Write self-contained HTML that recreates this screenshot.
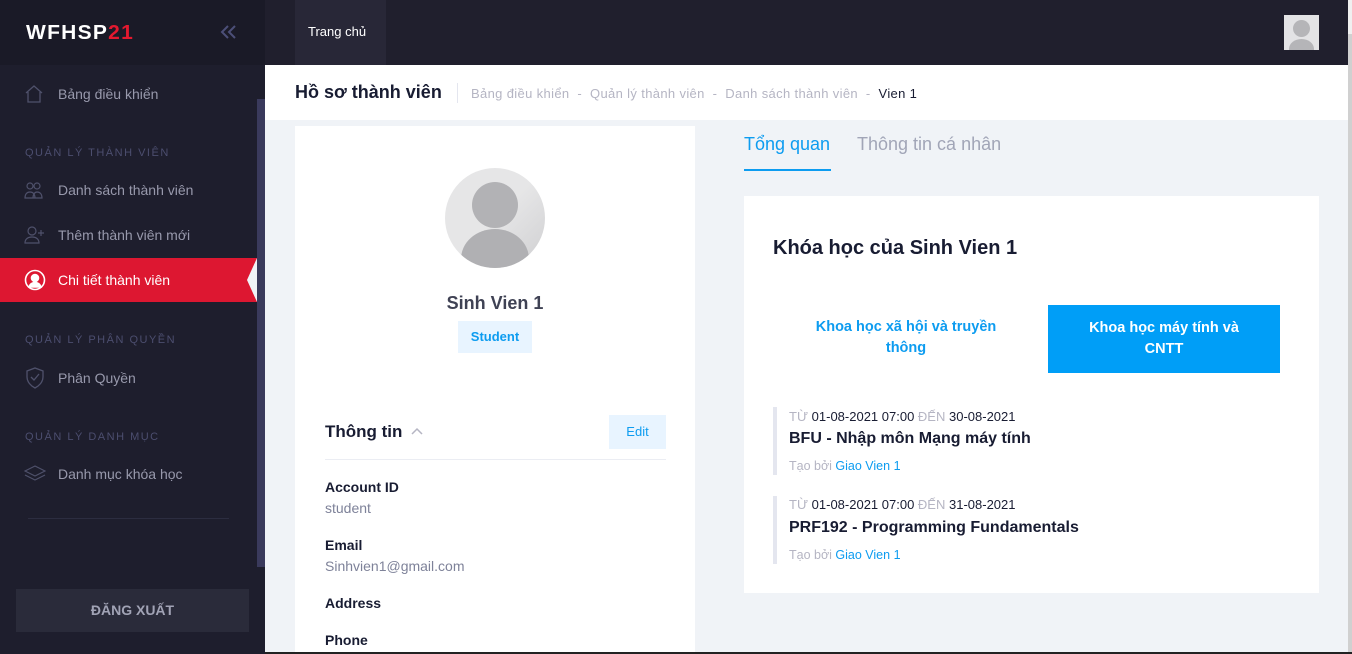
<!DOCTYPE html>
<html><head><meta charset="utf-8"><style>
*{box-sizing:border-box;margin:0;padding:0}
body{width:1352px;height:654px;overflow:hidden;background:#f0f3f7;font-family:"Liberation Sans",sans-serif;position:relative}
.abs{position:absolute}
.side{left:0;top:0;width:265px;height:654px;background:#1e1e2d}
.logo{left:0;top:0;width:265px;height:65px;background:#1a1a27}
.top{left:265px;top:0;width:1087px;height:65px;background:#201f2d}
.nav{color:#9899ac;font-size:14px}
.sec{color:#4c4e6f;font-size:11px;letter-spacing:1.5px}
.t{white-space:nowrap}
</style></head><body>
<div class="abs side"></div>
<div class="abs logo"></div>
<div class="abs t" style="left:26px;top:22px;font-size:20px;font-weight:900;color:#fff;letter-spacing:1.2px;transform:scaleX(1.05);transform-origin:left">WFHSP<span style="color:#e3192f">21</span></div>
<svg class="abs" style="left:220px;top:25px" width="18" height="14" viewBox="0 0 18 14" fill="none" stroke="#4c4f78" stroke-width="2"><path d="M8 1 L2 7 L8 13 M15 1 L9 7 L15 13"/></svg>
<div class="abs top"></div>
<div class="abs" style="left:295px;top:0;width:91px;height:65px;background:#282737"></div>
<div class="abs t" style="left:308px;top:24px;color:#fff;font-size:13px">Trang chủ</div>
<div class="abs" style="left:1284px;top:15px;width:35px;height:35px;background:#e3e3e5;overflow:hidden"><div class="abs" style="left:9px;top:5px;width:17px;height:17px;border-radius:50%;background:#b5b5b8"></div><div class="abs" style="left:5px;top:24px;width:25px;height:20px;border-radius:50%;background:#b5b5b8"></div></div>
<div class="abs" style="left:1348px;top:0;width:4px;height:654px;background:#d0d0d0"></div>
<div class="abs" style="left:1348px;top:0;width:4px;height:34px;background:#f0f0f0"></div>

<svg class="abs" style="left:24px;top:84px" width="20" height="20" viewBox="0 0 20 20" fill="none" stroke="#4f516b" stroke-width="1.3"><path d="M2 9 L10 2 L18 9 M4 8 V18 H16 V8"/></svg>
<div class="abs t nav" style="left:58px;top:86px">Bảng điều khiển</div>
<div class="abs t sec" style="left:25px;top:147px">QUẢN LÝ THÀNH VIÊN</div>
<svg class="abs" style="left:24px;top:181px" width="20" height="18" viewBox="0 0 20 18" fill="none" stroke="#4f516b" stroke-width="1.2"><circle cx="6" cy="5" r="3"/><circle cx="13" cy="5" r="3"/><path d="M1 17c0-4 2-6 5-6s5 2 5 6zM9 17c0-4 2-6 4-6 3 0 5 2 5 6z"/></svg>
<div class="abs t nav" style="left:58px;top:182px">Danh sách thành viên</div>
<svg class="abs" style="left:24px;top:226px" width="22" height="18" viewBox="0 0 22 18" fill="none" stroke="#4f516b" stroke-width="1.2"><circle cx="8" cy="5" r="4"/><path d="M1 17c0-4 3-6 7-6s7 2 7 6zM17 4v6M14 7h6"/></svg>
<div class="abs t nav" style="left:58px;top:227px">Thêm thành viên mới</div>
<div class="abs" style="left:0;top:258px;width:257px;height:44px;background:#dd1731"></div>
<div class="abs" style="left:247px;top:258px;width:0;height:0;border-top:22px solid transparent;border-bottom:22px solid transparent;border-right:10px solid #f0f3f7"></div>
<svg class="abs" style="left:24px;top:269px" width="22" height="22" viewBox="0 0 22 22" fill="none" stroke="#fff" stroke-width="1.6"><circle cx="11" cy="11" r="9.5"/><circle cx="11" cy="9" r="3.5" fill="#fff"/><path d="M5 18c1-3 3-4.5 6-4.5s5 1.5 6 4.5z" fill="#fff"/></svg>
<div class="abs t" style="left:58px;top:272px;color:#fff;font-size:14px">Chi tiết thành viên</div>
<div class="abs t sec" style="left:25px;top:334px">QUẢN LÝ PHÂN QUYỀN</div>
<svg class="abs" style="left:25px;top:367px" width="20" height="22" viewBox="0 0 20 22" fill="none" stroke="#4f516b" stroke-width="1.3"><path d="M10 1 L18 4 V10 C18 15 14 19 10 21 C6 19 2 15 2 10 V4 Z"/><path d="M6 10 L9 13 L14 7"/></svg>
<div class="abs t nav" style="left:58px;top:370px">Phân Quyền</div>
<div class="abs t sec" style="left:25px;top:431px">QUẢN LÝ DANH MỤC</div>
<svg class="abs" style="left:24px;top:465px" width="22" height="18" viewBox="0 0 22 18" fill="none" stroke="#4f516b" stroke-width="1.2"><path d="M11 1 L21 6 L11 11 L1 6 Z M1 10 L11 15 L21 10"/></svg>
<div class="abs t nav" style="left:58px;top:466px">Danh mục khóa học</div>
<div class="abs" style="left:28px;top:518px;width:201px;height:1px;background:#2c2d40"></div>
<div class="abs" style="left:257px;top:99px;width:8px;height:468px;background:#3a3a5c"></div>
<div class="abs" style="left:16px;top:589px;width:233px;height:43px;background:#2a2b3a;color:#a1a3b5;font-size:14px;font-weight:bold;text-align:center;line-height:43px">ĐĂNG XUẤT</div>

<div class="abs" style="left:265px;top:65px;width:1083px;height:55px;background:#fff"></div>
<div class="abs t" style="left:295px;top:82px;font-size:18px;font-weight:bold;color:#181c32">Hồ sơ thành viên</div>
<div class="abs" style="left:457px;top:83px;width:1px;height:20px;background:#e4e6ef"></div>
<div class="abs t" style="left:471px;top:86px;font-size:13px;color:#b5b5c3;letter-spacing:0.35px">Bảng điều khiển &nbsp;-&nbsp; Quản lý thành viên &nbsp;-&nbsp; Danh sách thành viên &nbsp;-&nbsp; <span style="color:#181c32">Vien 1</span></div>

<div class="abs" style="left:295px;top:126px;width:400px;height:528px;background:#fff"></div>
<div class="abs" style="left:420px;top:168px;width:100px;height:100px;margin-left:25px;border-radius:50%;background:linear-gradient(135deg,#e6e6e7 50%,#cfcfd1);overflow:hidden">
<div class="abs" style="left:27px;top:14px;width:46px;height:46px;border-radius:50%;background:#b2b2b5"></div>
<div class="abs" style="left:16px;top:61px;width:68px;height:60px;border-radius:50%;background:#b0b0b3"></div></div>
<div class="abs t" style="left:295px;top:293px;width:400px;text-align:center;font-size:18px;font-weight:bold;color:#3f4254">Sinh Vien 1</div>
<div class="abs" style="left:458px;top:321px;width:74px;height:32px;background:#e8f4ff;color:#0d9cf0;font-size:13px;font-weight:bold;text-align:center;line-height:32px">Student</div>
<div class="abs t" style="left:325px;top:422px;font-size:17px;font-weight:bold;color:#181c32">Thông tin</div>
<svg class="abs" style="left:411px;top:427px" width="12" height="8" viewBox="0 0 12 8" fill="none" stroke="#b5b5c3" stroke-width="1.5"><path d="M1 7 L6 2 L11 7"/></svg>
<div class="abs" style="left:609px;top:415px;width:57px;height:34px;background:#e8f4ff;color:#0d9cf0;font-size:13px;text-align:center;line-height:34px">Edit</div>
<div class="abs" style="left:325px;top:459px;width:341px;height:1px;background:#ebedf3"></div>
<div class="abs t" style="left:325px;top:479px;font-size:14px;font-weight:bold;color:#181c32">Account ID</div>
<div class="abs t" style="left:325px;top:500px;font-size:14px;color:#7e8299">student</div>
<div class="abs t" style="left:325px;top:537px;font-size:14px;font-weight:bold;color:#181c32">Email</div>
<div class="abs t" style="left:325px;top:558px;font-size:14px;color:#7e8299">Sinhvien1@gmail.com</div>
<div class="abs t" style="left:325px;top:595px;font-size:14px;font-weight:bold;color:#181c32">Address</div>
<div class="abs t" style="left:325px;top:632px;font-size:14px;font-weight:bold;color:#181c32">Phone</div>

<div class="abs t" style="left:744px;top:134px;font-size:18px;color:#0d9cf0">Tổng quan</div>
<div class="abs" style="left:744px;top:169px;width:87px;height:2px;background:#0d9cf0"></div>
<div class="abs t" style="left:857px;top:134px;font-size:18px;color:#a1a5b7">Thông tin cá nhân</div>

<div class="abs" style="left:744px;top:196px;width:575px;height:397px;background:#fff"></div>
<div class="abs t" style="left:773px;top:237px;font-size:20px;font-weight:bold;color:#181c32">Khóa học của Sinh Vien 1</div>
<div class="abs" style="left:790px;top:317px;width:232px;text-align:center;font-size:14.5px;font-weight:bold;color:#0d9cf0;line-height:21px">Khoa học xã hội và truyền<br>thông</div>
<div class="abs" style="left:1048px;top:305px;width:232px;height:68px;background:#009ef7;text-align:center;font-size:14.5px;font-weight:bold;color:#fff;line-height:21px;padding-top:13px">Khoa học máy tính và<br>CNTT</div>

<div class="abs" style="left:773px;top:407px;width:4px;height:68px;background:#e4e6ef"></div>
<div class="abs t" style="left:789px;top:409px;font-size:13px;color:#181c32"><span style="color:#b5b5c3">TỪ</span> 01-08-2021 07:00 <span style="color:#b5b5c3">ĐẾN</span> 30-08-2021</div>
<div class="abs t" style="left:789px;top:430px;font-size:16px;font-weight:bold;color:#181c32">BFU - Nhập môn Mạng máy tính</div>
<div class="abs t" style="left:789px;top:459px;font-size:12.5px;color:#b5b5c3">Tạo bởi <span style="color:#0d9cf0">Giao Vien 1</span></div>

<div class="abs" style="left:773px;top:496px;width:4px;height:68px;background:#e4e6ef"></div>
<div class="abs t" style="left:789px;top:497px;font-size:13px;color:#181c32"><span style="color:#b5b5c3">TỪ</span> 01-08-2021 07:00 <span style="color:#b5b5c3">ĐẾN</span> 31-08-2021</div>
<div class="abs t" style="left:789px;top:519px;font-size:16px;font-weight:bold;color:#181c32">PRF192 - Programming Fundamentals</div>
<div class="abs t" style="left:789px;top:548px;font-size:12.5px;color:#b5b5c3">Tạo bởi <span style="color:#0d9cf0">Giao Vien 1</span></div>

<div class="abs" style="left:265px;top:652px;width:1087px;height:2px;background:#222"></div>
</body></html>
